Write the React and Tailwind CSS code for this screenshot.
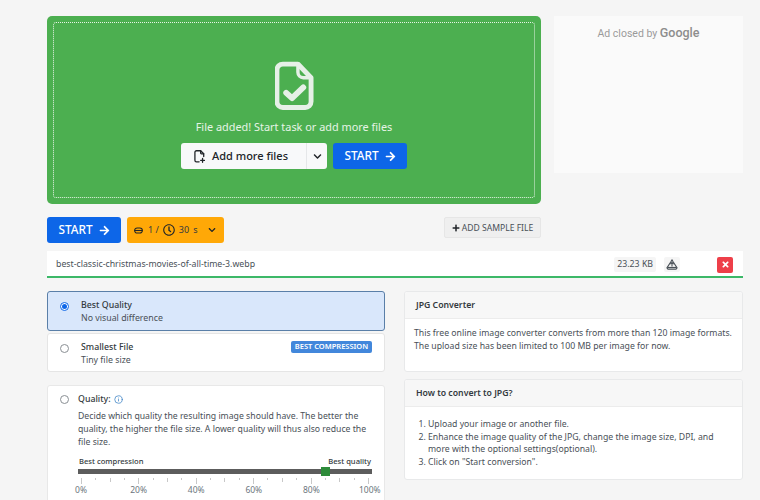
import React from 'react';
import { FaArrowRight, FaChevronDown, FaPlus, FaRegClock, FaTimes } from 'react-icons/fa';
import { Info } from 'lucide-react';

const ticks = Array.from({ length: 21 }, (_, i) => i);
const labels = ['0%', '20%', '40%', '60%', '80%', '100%'];

const FileCheckIcon = () => (
  <svg viewBox="0 0 40 50" className="h-[50px] w-[39px]" fill="none" stroke="#e6f0e7" strokeWidth="5" strokeLinejoin="round" strokeLinecap="round">
    <path d="M8 2.5h15.5L37 16.5V41a6 6 0 0 1-6 6H8a6 6 0 0 1-6-6V8.500a6 6 0 0 1 6-6z" />
    <path d="M23.500 2.500V11a5.500 5.500 0 0 0 5.500 5.500h8" strokeWidth="3.500" />
    <path d="M11.500 32l6 5.500L29 26.500" strokeWidth="6" />
  </svg>
);

const AddFileIcon = () => (
  <svg viewBox="0 0 14 17" className="h-[13px] w-[11px]" fill="none" stroke="#212529" strokeWidth="1.700" strokeLinecap="round" strokeLinejoin="round">
    <path d="M6.500 15.500H3a2 2 0 0 1-2-2V3a2 2 0 0 1 2-2h5.500L12.500 5v3.500" />
    <path d="M8.500 1v3a1 1 0 0 0 1 1h3" />
    <path d="M11 11v5M8.500 13.500h5" />
  </svg>
);

const CoinIcon = () => (
  <svg viewBox="0 0 10 7" className="h-[7px] w-[9px]" fill="none" stroke="#212529" strokeWidth="1.200">
    <rect x="0.700" y="0.700" width="8.600" height="5.600" rx="2.800" />
    <path d="M0.700 3.500h8.600" />
  </svg>
);

const DriveIcon = () => (
  <svg viewBox="0 0 14 13" className="h-[11px] w-[12px]" fill="none" stroke="#495057" strokeWidth="1.300" strokeLinejoin="round">
    <path d="M5.500 3.500L7 1l1.500 2.500L13 10.500 11.800 12H2.200L1 10.500z" />
    <path d="M7 4v5M5 6l2-2 2 2" />
    <path d="M1.500 10h11" />
  </svg>
);

const StartButton = () => (
  <button className="flex h-[26px] w-[74px] items-center justify-center gap-[6px] rounded-[3px] bg-[#0d66e8] text-[11.800px] font-medium text-white">
    START
    <FaArrowRight className="h-[11px] w-[11px]" />
  </button>
);

const Radio = ({ checked }) => (
  <span className={`flex h-[9px] w-[9px] shrink-0 items-center justify-center rounded-full border ${checked ? 'border-[#0d66e8] bg-white' : 'border-[#8a8f94] bg-white'}`}>
    {checked && <span className="h-[5px] w-[5px] rounded-full bg-[#0d66e8]" />}
  </span>
);

const InfoCard = ({ title, className, children }) => (
  <div className={`overflow-hidden rounded-[3px] border border-[#e8e9ea] bg-white ${className}`}>
    <div className="flex h-[27px] items-center border-b border-[#ececec] bg-[#f7f7f7] px-[11px] pt-[2px] text-[8.700px] font-semibold text-[#343a40]">
      {title}
    </div>
    {children}
  </div>
);

export default function App() {
  return (
    <div className="h-[500px] w-[760px] overflow-hidden bg-[#f5f5f5] pl-[47px] pt-4 font-['Noto_Sans',sans-serif] text-[#495057]">
      <div className="flex w-[696px] items-start gap-[13px]">
        {/* Upload box */}
        <div className="h-[188px] w-[494px] rounded-[5px] bg-[#4caf50] p-[6px]">
          <div className="flex h-full flex-col items-center rounded-[3px] border border-dotted border-[#e6f4e6] pt-[38px]">
            <FileCheckIcon />
            <p className="mt-[8px] text-[10.900px] leading-[16px] text-[#e6f4e6]">File added! Start task or add more files</p>
            <div className="mt-[8px] flex gap-[6px]">
              <div className="flex h-[26px] w-[146px] rounded-[3px] bg-[#f8f9fa] text-[#212529]">
                <div className="flex w-[126px] items-center justify-center gap-[7px] border-r border-[#e5e7e9] pr-[5px] text-[11px] font-medium">
                  <AddFileIcon />
                  Add more files
                </div>
                <div className="flex flex-1 items-center justify-center">
                  <FaChevronDown className="h-[9px] w-[9px]" />
                </div>
              </div>
              <StartButton />
            </div>
          </div>
        </div>

        {/* Ad */}
        <div className="h-[157px] w-[189px] bg-[#fafafa] pt-[9px] text-center font-['Roboto',sans-serif] text-[10.500px] leading-[16px] text-[#9a9a9a]">
          Ad closed by <span className="text-[12.500px] font-medium text-[#8d8d8d]">Google</span>
        </div>
      </div>

      {/* Actions */}
      <div className="mt-[13px] flex h-[26px] w-[494px] items-start">
        <StartButton />
        <div className="ml-[6px] flex h-[26px] w-[97px] items-center rounded-[3px] bg-[#ffa807] pl-[7px] text-[9px] text-[#343a40]">
          <CoinIcon />
          <span className="ml-[5px]">1 /</span>
          <FaRegClock className="ml-[4px] h-[12px] w-[12px] text-[#212529]" />
          <span className="ml-[4px]">30</span>
          <span className="ml-[4px]">s</span>
          <FaChevronDown className="ml-[11px] h-[8px] w-[8px] text-[#212529]" />
        </div>
        <button className="ml-auto flex h-[21px] w-[97px] items-center justify-center gap-[2px] rounded-[2px] border border-[#e6e6e6] bg-[#efefef] pt-[1px] text-[8.600px] text-[#495057]">
          <FaPlus className="h-[8px] w-[8px] text-[#212529]" />
          ADD SAMPLE FILE
        </button>
      </div>

      {/* File row */}
      <div className="mt-[8px] flex h-[27px] w-[696px] items-center border-b-2 border-[#3cb868] bg-white pl-[9px] pr-[10px] pt-[2px] text-[8.750px]">
        <span className="mt-[1px]">best-classic-christmas-movies-of-all-time-3.webp</span>
        <span className="ml-auto rounded-[2px] bg-[#f5f5f5] px-[3px] py-[1px]">23.23 KB</span>
        <span className="ml-[8px] flex h-[15px] w-[16px] items-center justify-center rounded-[2px] bg-[#f5f5f5]">
          <DriveIcon />
        </span>
        <span className="ml-[37px] flex h-[16px] w-[16px] items-center justify-center rounded-[2px] bg-[#ee3f49]">
          <FaTimes className="h-[9px] w-[9px] text-white" />
        </span>
      </div>

      {/* Options and info */}
      <div className="mt-[13px] flex w-[696px] items-start gap-[19px]">
        <div className="w-[338px]">
          <div className="flex h-[40px] items-start rounded-[3px] border border-[#5a7fa8] bg-[#d9e7fb] pl-[12px] pt-[7px]">
            <span className="mt-[3px]"><Radio checked /></span>
            <div className="ml-[12px] text-[8.800px] leading-[12.700px]">
              <div className="font-medium text-[#343a40]">Best Quality</div>
              <div>No visual difference</div>
            </div>
          </div>
          <div className="mt-[2px] flex h-[39px] items-start rounded-[3px] border border-[#e5e5e5] bg-white pl-[12px] pr-[12px] pt-[7px]">
            <span className="mt-[3px]"><Radio /></span>
            <div className="ml-[12px] text-[8.800px] leading-[12.700px]">
              <div className="font-medium text-[#343a40]">Smallest File</div>
              <div>Tiny file size</div>
            </div>
            <span className="ml-auto flex h-[12px] w-[81px] items-center justify-center rounded-[2px] bg-[#4287db] text-[7.500px] font-semibold text-white">
              BEST COMPRESSION
            </span>
          </div>

          <div className="mt-[13px] h-[140px] rounded-[3px] border border-[#e8e8e8] bg-white pl-[12px] pr-[12px] pt-[7px]">
            <div className="flex items-center">
              <Radio />
              <span className="ml-[9px] text-[8.800px] font-medium text-[#343a40]">Quality:</span>
              <Info className="ml-[3px] h-[9px] w-[9px] text-[#3b82c4]" />
            </div>
            <div className="ml-[18px]">
              <p className="mt-[4px] text-[8.700px] leading-[12.700px]">
                Decide which quality the resulting image should have. The better the quality, the higher the file size. A lower quality will thus also reduce the file size.
              </p>
              <div className="mt-[8px] flex justify-between px-[1px] text-[7.600px] font-medium leading-[11px] text-[#343a40]">
                <span>Best compression</span>
                <span>Best quality</span>
              </div>
              <div className="relative mt-[2px] h-[5px] bg-[#5c5c5c]">
                <span className="absolute left-[243px] top-[-2px] h-[9px] w-[9px] bg-[#2e8b3a]" />
              </div>
              <div className="mt-[4px] flex justify-between px-[3px]">
                {ticks.map((t) => (
                  <span key={t} className={`w-px bg-[#c8c8c8] ${t % 4 === 0 ? 'h-[6px]' : t % 2 === 0 ? 'h-[4px]' : 'h-[2px]'}`} />
                ))}
              </div>
              <div className="-mx-[7px] flex justify-between text-[8.500px] leading-[11px] text-[#6c757d]">
                {labels.map((l) => <span key={l} className="w-[20px] text-center">{l}</span>)}
              </div>
            </div>
          </div>
        </div>

        <div className="w-[339px]">
          <InfoCard title="JPG Converter" className="h-[81px]">
            <p className="px-[9px] pt-[8px] text-[8.700px] leading-[13px]">
              This free online image converter converts from more than 120 image formats. The upload size has been limited to 100 MB per image for now.
            </p>
          </InfoCard>
          <InfoCard title="How to convert to JPG?" className="mt-[7px] h-[101px]">
            <ol className="list-decimal pl-[23px] pr-[9px] pt-[11px] text-[8.700px] leading-[12.700px]">
              <li>Upload your image or another file.</li>
              <li>Enhance the image quality of the JPG, change the image size, DPI, and more with the optional settings(optional).</li>
              <li>Click on "Start conversion".</li>
            </ol>
          </InfoCard>
        </div>
      </div>
    </div>
  );
}
